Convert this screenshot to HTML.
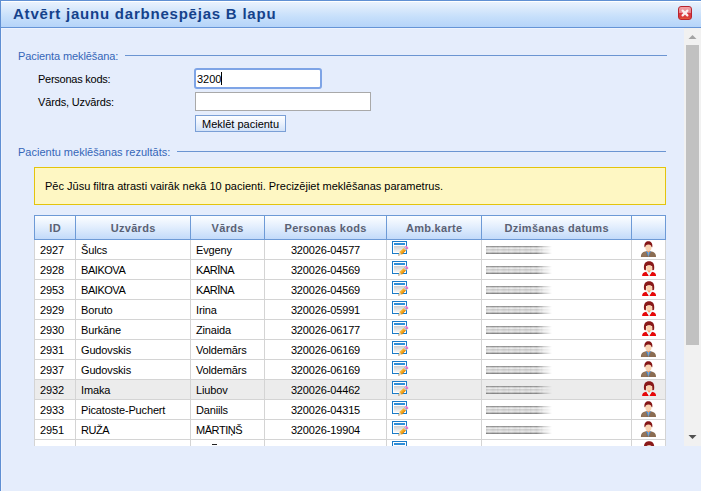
<!DOCTYPE html>
<html><head><meta charset="utf-8">
<style>
*{margin:0;padding:0;box-sizing:border-box}
html,body{width:701px;height:491px;overflow:hidden;background:#e5edfc}
body{position:relative;font-family:"Liberation Sans",sans-serif;font-size:11px;color:#000}
.a{position:absolute}
.t{position:absolute;white-space:nowrap;line-height:13px}
#bl{left:0;top:0;width:1px;height:491px;background:#5f8fd3}
#bt{left:0;top:0;width:701px;height:1px;background:#5f8fd3}
#tb{left:1px;top:1px;width:700px;height:26px;background:linear-gradient(#e9f2fe 0,#dbeafc 6px,#c6dffb 15px,#b5d4f9 25px);border-top:1px solid #fff}
#tbb{left:1px;top:27px;width:700px;height:1px;background:#6594d6}
#title{left:13px;top:5px;font-size:15px;font-weight:bold;color:#15428b;letter-spacing:0.78px;line-height:18px}
#close{left:678px;top:6px;width:14px;height:14px;border-radius:3px;background:linear-gradient(#f2a2a6 0,#e6808a 48%,#d83442 52%,#dc4038 90%,#e8603a 100%);border:1px solid #b8242e}
#sb{left:684px;top:28px;width:17px;height:418px;background:#f1f1f1}
#thumb{left:686px;top:45px;width:13px;height:300px;background:#c1c1c1}
.lg{color:#3566b8;letter-spacing:-0.1px}
.ln{height:1px;background:#6b95d2}
.hd{background:linear-gradient(#ffffff 0,#f8fbff 3px,#e2eefd 12px,#c2dafa 24px)}
.th{font-weight:bold;color:#5a6174;text-align:center;letter-spacing:0.3px;text-indent:0.3px}
.td{color:#000;letter-spacing:-0.15px}
.gl{background:#d4d4d4}
.blur{width:66px;height:8px;background:repeating-linear-gradient(90deg,rgba(0,0,0,.05) 0,rgba(255,255,255,.05) 3px,rgba(0,0,0,.04) 7px,rgba(0,0,0,0) 11px),linear-gradient(#999999 0%,#999999 12.5%,#d4d4d4 12.5%,#d4d4d4 25.0%,#ebebeb 25.0%,#ebebeb 37.5%,#cfcfcf 37.5%,#cfcfcf 50.0%,#d9d9d9 50.0%,#d9d9d9 62.5%,#e6e6e6 62.5%,#e6e6e6 75.0%,#c4c4c4 75.0%,#c4c4c4 87.5%,#8a8a8a 87.5%,#8a8a8a 100%);-webkit-mask-image:linear-gradient(90deg,#000 76%,transparent 100%);mask-image:linear-gradient(90deg,#000 76%,transparent 100%)}
</style></head><body>
<svg width="0" height="0" style="position:absolute"><defs>
<symbol id="amb" viewBox="0 0 18 17">
<rect x="1.5" y="0.5" width="14" height="12" fill="#fff" stroke="#1b7cc7"/>
<rect x="3" y="2" width="11" height="2" fill="#2f8ed8"/>
<rect x="3" y="5" width="11" height="6" fill="url(#gg)"/>
<g transform="translate(7.3 14.6) rotate(-44)">
<path d="M0 0L3.4 -1.7 3.4 1.7Z" fill="#f3dcae"/>
<path d="M0 0L1.3 -0.65 1.3 0.65Z" fill="#5a3d20"/>
<rect x="3.4" y="-1.7" width="5.6" height="3.4" fill="#f4a41c"/>
<rect x="3.4" y="-1.7" width="5.6" height="1" fill="#f9c04a"/>
<rect x="3.4" y="0.9" width="5.6" height="0.8" fill="#d9800c"/>
<rect x="9" y="-1.7" width="1.7" height="3.4" fill="#e2e2e2"/>
<rect x="9.5" y="-1.7" width="0.6" height="3.4" fill="#9a9a9a"/>
<rect x="10.7" y="-1.8" width="2" height="3.6" rx="0.8" fill="#e878cc"/>
</g>
</symbol>
<linearGradient id="gg" x1="0" y1="0" x2="0" y2="1"><stop offset="0" stop-color="#cfcfcf"/><stop offset="1" stop-color="#f6f6f6"/></linearGradient>
<symbol id="male" viewBox="0 0 17 17">
<path d="M0.9 16C0.9 11.6 3.4 10.3 8.4 10.3S16 11.6 16 16Z" fill="#8a6c52"/>
<path d="M2 15.5C2 12.3 3.8 11.2 6 10.8L6.5 15.5Z" fill="#9c7d62" opacity=".6"/>
<path d="M5.9 10.3L8.4 16 10.9 10.3Z" fill="#4a93de"/>
<path d="M8 11.2L8.4 16 8.8 11.2Z" fill="#f0b878"/>
<path d="M6.8 8.6H10V10.4L8.4 11.4 6.8 10.4Z" fill="#f2a468"/>
<ellipse cx="8.4" cy="6.5" rx="3.1" ry="3.5" fill="#fad4b2"/>
<path d="M4.5 6.3C3.9 1.9 6 0.2 8.4 0.2S12.9 1.9 12.3 6.3L11.5 6C11.4 4.2 10.5 3.4 8.4 3.4S5.4 4.2 5.3 6Z" fill="#851515"/>
</symbol>
<symbol id="fem" viewBox="0 0 17 17">
<path d="M4.1 8.6C3.2 2.4 5.8 0.3 9.1 0.3S15 2.4 14.1 8.6C13.6 9.4 12.8 9.4 12.3 9L12.2 5.2C11 4.2 7.2 4.2 6 5.2L5.9 9C5.4 9.4 4.6 9.4 4.1 8.6Z" fill="#8a1919"/>
<ellipse cx="9.1" cy="7.4" rx="3" ry="3.1" fill="#fad2ae"/>
<path d="M7.8 9.5H10.4V11L9.1 12 7.8 11Z" fill="#f3aa70"/>
<path d="M2.1 15C2.1 12 3.6 11.2 6.3 10.7L9.1 15 11.9 10.7C14.6 11.2 16.1 12 16.1 15Z" fill="#e60808"/>
<path d="M6.3 10.4L9.1 15.2 11.9 10.4 10.4 10.3 9.1 12 7.8 10.3Z" fill="#e8f8fb"/>
</symbol>
</defs></svg>
<div class="a" id="tb"></div>
<div class="a" id="tbb"></div>
<div class="a" id="bt"></div>
<div class="a" id="bl"></div>
<div class="a" style="left:1px;top:28px;width:700px;height:1px;background:#eef3fe"></div>
<div class="a" style="left:1px;top:28px;width:1px;height:463px;background:#eef3fe"></div>
<div class="t" id="title">Atvērt jaunu darbnespējas B lapu</div>
<div class="a" id="close"><svg width="12" height="12" viewBox="0 0 12 12" style="position:absolute;left:0;top:0"><path d="M3.6 3.6L8.4 8.4M8.4 3.6L3.6 8.4" stroke="#fbeff0" stroke-width="2.2" stroke-linecap="round"/></svg></div>

<div class="a" id="sb"></div>
<div class="a" id="thumb"></div>
<svg class="a" style="left:684px;top:28px" width="17" height="17"><path d="M4.5 11H12.5L8.5 7Z" fill="#a3a3a3"/></svg>
<svg class="a" style="left:684px;top:429px" width="17" height="17"><path d="M4.5 6H12.5L8.5 10Z" fill="#505050"/></svg>

<!-- fieldset 1 -->
<div class="t lg" style="left:18px;top:50px">Pacienta meklēšana:</div>
<div class="a ln" style="left:125px;top:55px;width:542px"></div>
<div class="t" style="left:38px;top:73px;letter-spacing:-0.25px">Personas kods:</div>
<div class="t" style="left:38px;top:96px;letter-spacing:-0.15px">Vārds, Uzvārds:</div>
<div class="a" style="left:194px;top:68px;width:128px;height:21px;border:2px solid #7ea4e6;border-radius:3px;background:#fff"></div>
<div class="t" style="left:197px;top:73px">3200</div>
<div class="a" style="left:221px;top:72px;width:1px;height:13px;background:#000"></div>
<div class="a" style="left:195px;top:92px;width:176px;height:19px;border:1px solid #a9a9a9;background:#fff"></div>
<div class="a" style="left:195px;top:115px;width:91px;height:17px;border:1px solid #7a9fd6;background:linear-gradient(#fdfeff,#edf3fd 45%,#d2e2f8)"></div>
<div class="t" style="left:202px;top:118px">Meklēt pacientu</div>

<!-- fieldset 2 -->
<div class="t lg" style="left:18px;top:146px;letter-spacing:0">Pacientu meklēšanas rezultāts:</div>
<div class="a ln" style="left:177px;top:151px;width:489px"></div>
<div class="a" style="left:34px;top:167px;width:632px;height:38px;border:1px solid #e3c40c;background:#fef7c3"></div>
<div class="t" style="left:45px;top:180px">Pēc Jūsu filtra atrasti vairāk nekā 10 pacienti. Precizējiet meklēšanas parametrus.</div>

<div id="grid" class="a" style="left:0;top:0;width:701px;height:446px;overflow:hidden">
<div class="a hd" style="left:34px;top:215px;width:632px;height:25px"></div>
<div class="t th" style="left:35px;top:222px;width:40px">ID</div>
<div class="a" style="left:75px;top:215px;width:1px;height:25px;background:#6d9ad6"></div>
<div class="t th" style="left:76px;top:222px;width:114px">Uzvārds</div>
<div class="a" style="left:190px;top:215px;width:1px;height:25px;background:#6d9ad6"></div>
<div class="t th" style="left:191px;top:222px;width:73px">Vārds</div>
<div class="a" style="left:264px;top:215px;width:1px;height:25px;background:#6d9ad6"></div>
<div class="t th" style="left:265px;top:222px;width:121px">Personas kods</div>
<div class="a" style="left:386px;top:215px;width:1px;height:25px;background:#6d9ad6"></div>
<div class="t th" style="left:387px;top:222px;width:94px">Amb.karte</div>
<div class="a" style="left:481px;top:215px;width:1px;height:25px;background:#6d9ad6"></div>
<div class="t th" style="left:482px;top:222px;width:149px">Dzimšanas datums</div>
<div class="a" style="left:631px;top:215px;width:1px;height:25px;background:#6d9ad6"></div>
<div class="a" style="left:34px;top:240px;width:632px;height:220px;background:#fff"></div>
<div class="a gl" style="left:34px;top:259px;width:632px;height:1px"></div>
<div class="t td" style="left:40px;top:244px">2927</div>
<div class="t td" style="left:81px;top:244px">Šulcs</div>
<div class="t td" style="left:196px;top:244px">Evgeny</div>
<div class="t td" style="left:265px;top:244px;width:121px;text-align:center">320026-04577</div>
<svg class="a" style="left:391px;top:241px" width="18" height="17"><use href="#amb"/></svg>
<div class="a blur" style="left:486px;top:246px"></div>
<svg class="a" style="left:640px;top:241px" width="17" height="17"><use href="#male"/></svg>
<div class="a gl" style="left:34px;top:279px;width:632px;height:1px"></div>
<div class="t td" style="left:40px;top:264px">2928</div>
<div class="t td" style="left:81px;top:264px;letter-spacing:-0.45px">BAIKOVA</div>
<div class="t td" style="left:196px;top:264px;letter-spacing:-0.45px">KARĪNA</div>
<div class="t td" style="left:265px;top:264px;width:121px;text-align:center">320026-04569</div>
<svg class="a" style="left:391px;top:261px" width="18" height="17"><use href="#amb"/></svg>
<div class="a blur" style="left:486px;top:266px"></div>
<svg class="a" style="left:640px;top:261px" width="17" height="17"><use href="#fem"/></svg>
<div class="a gl" style="left:34px;top:299px;width:632px;height:1px"></div>
<div class="t td" style="left:40px;top:284px">2953</div>
<div class="t td" style="left:81px;top:284px;letter-spacing:-0.45px">BAIKOVA</div>
<div class="t td" style="left:196px;top:284px;letter-spacing:-0.45px">KARĪNA</div>
<div class="t td" style="left:265px;top:284px;width:121px;text-align:center">320026-04569</div>
<svg class="a" style="left:391px;top:281px" width="18" height="17"><use href="#amb"/></svg>
<div class="a blur" style="left:486px;top:286px"></div>
<svg class="a" style="left:640px;top:281px" width="17" height="17"><use href="#fem"/></svg>
<div class="a gl" style="left:34px;top:319px;width:632px;height:1px"></div>
<div class="t td" style="left:40px;top:304px">2929</div>
<div class="t td" style="left:81px;top:304px">Boruto</div>
<div class="t td" style="left:196px;top:304px">Irina</div>
<div class="t td" style="left:265px;top:304px;width:121px;text-align:center">320026-05991</div>
<svg class="a" style="left:391px;top:301px" width="18" height="17"><use href="#amb"/></svg>
<div class="a blur" style="left:486px;top:306px"></div>
<svg class="a" style="left:640px;top:301px" width="17" height="17"><use href="#fem"/></svg>
<div class="a gl" style="left:34px;top:339px;width:632px;height:1px"></div>
<div class="t td" style="left:40px;top:324px">2930</div>
<div class="t td" style="left:81px;top:324px">Burkāne</div>
<div class="t td" style="left:196px;top:324px">Zinaida</div>
<div class="t td" style="left:265px;top:324px;width:121px;text-align:center">320026-06177</div>
<svg class="a" style="left:391px;top:321px" width="18" height="17"><use href="#amb"/></svg>
<div class="a blur" style="left:486px;top:326px"></div>
<svg class="a" style="left:640px;top:321px" width="17" height="17"><use href="#fem"/></svg>
<div class="a gl" style="left:34px;top:359px;width:632px;height:1px"></div>
<div class="t td" style="left:40px;top:344px">2931</div>
<div class="t td" style="left:81px;top:344px">Gudovskis</div>
<div class="t td" style="left:196px;top:344px">Voldemārs</div>
<div class="t td" style="left:265px;top:344px;width:121px;text-align:center">320026-06169</div>
<svg class="a" style="left:391px;top:341px" width="18" height="17"><use href="#amb"/></svg>
<div class="a blur" style="left:486px;top:346px"></div>
<svg class="a" style="left:640px;top:341px" width="17" height="17"><use href="#male"/></svg>
<div class="a gl" style="left:34px;top:379px;width:632px;height:1px"></div>
<div class="t td" style="left:40px;top:364px">2937</div>
<div class="t td" style="left:81px;top:364px">Gudovskis</div>
<div class="t td" style="left:196px;top:364px">Voldemārs</div>
<div class="t td" style="left:265px;top:364px;width:121px;text-align:center">320026-06169</div>
<svg class="a" style="left:391px;top:361px" width="18" height="17"><use href="#amb"/></svg>
<div class="a blur" style="left:486px;top:366px"></div>
<svg class="a" style="left:640px;top:361px" width="17" height="17"><use href="#male"/></svg>
<div class="a" style="left:35px;top:380px;width:630px;height:19px;background:#ececec"></div>
<div class="a gl" style="left:34px;top:399px;width:632px;height:1px"></div>
<div class="t td" style="left:40px;top:384px">2932</div>
<div class="t td" style="left:81px;top:384px">Imaka</div>
<div class="t td" style="left:196px;top:384px">Liubov</div>
<div class="t td" style="left:265px;top:384px;width:121px;text-align:center">320026-04462</div>
<svg class="a" style="left:391px;top:381px" width="18" height="17"><use href="#amb"/></svg>
<div class="a blur" style="left:486px;top:386px"></div>
<svg class="a" style="left:640px;top:381px" width="17" height="17"><use href="#fem"/></svg>
<div class="a gl" style="left:34px;top:419px;width:632px;height:1px"></div>
<div class="t td" style="left:40px;top:404px">2933</div>
<div class="t td" style="left:81px;top:404px">Picatoste-Puchert</div>
<div class="t td" style="left:196px;top:404px">Daniils</div>
<div class="t td" style="left:265px;top:404px;width:121px;text-align:center">320026-04315</div>
<svg class="a" style="left:391px;top:401px" width="18" height="17"><use href="#amb"/></svg>
<div class="a blur" style="left:486px;top:406px"></div>
<svg class="a" style="left:640px;top:401px" width="17" height="17"><use href="#male"/></svg>
<div class="a gl" style="left:34px;top:439px;width:632px;height:1px"></div>
<div class="t td" style="left:40px;top:424px">2951</div>
<div class="t td" style="left:81px;top:424px;letter-spacing:-0.45px">RUŽA</div>
<div class="t td" style="left:196px;top:424px;letter-spacing:-0.45px">MĀRTIŅŠ</div>
<div class="t td" style="left:265px;top:424px;width:121px;text-align:center">320026-19904</div>
<svg class="a" style="left:391px;top:421px" width="18" height="17"><use href="#amb"/></svg>
<div class="a blur" style="left:486px;top:426px"></div>
<svg class="a" style="left:640px;top:421px" width="17" height="17"><use href="#male"/></svg>
<div class="a gl" style="left:34px;top:459px;width:632px;height:1px"></div>
<div class="t td" style="left:40px;top:444px">2952</div>
<div class="t td" style="left:81px;top:444px"></div>
<div class="t td" style="left:196px;top:444px"></div>
<div class="t td" style="left:265px;top:444px;width:121px;text-align:center"></div>
<svg class="a" style="left:391px;top:441px" width="18" height="17"><use href="#amb"/></svg>
<div class="a blur" style="left:486px;top:446px"></div>
<svg class="a" style="left:640px;top:441px" width="17" height="17"><use href="#fem"/></svg>
<div class="a gl" style="left:34px;top:240px;width:1px;height:220px"></div>
<div class="a gl" style="left:75px;top:240px;width:1px;height:220px"></div>
<div class="a gl" style="left:190px;top:240px;width:1px;height:220px"></div>
<div class="a gl" style="left:264px;top:240px;width:1px;height:220px"></div>
<div class="a gl" style="left:386px;top:240px;width:1px;height:220px"></div>
<div class="a gl" style="left:481px;top:240px;width:1px;height:220px"></div>
<div class="a gl" style="left:631px;top:240px;width:1px;height:220px"></div>
<div class="a gl" style="left:665px;top:240px;width:1px;height:220px"></div>
<div class="a" style="left:34px;top:215px;width:632px;height:25px;border:1px solid #6d9ad6"></div>
<div class="a" style="left:212px;top:444px;width:5px;height:1.4px;background:#222"></div>
</div><!--/grid-->
</body></html>
